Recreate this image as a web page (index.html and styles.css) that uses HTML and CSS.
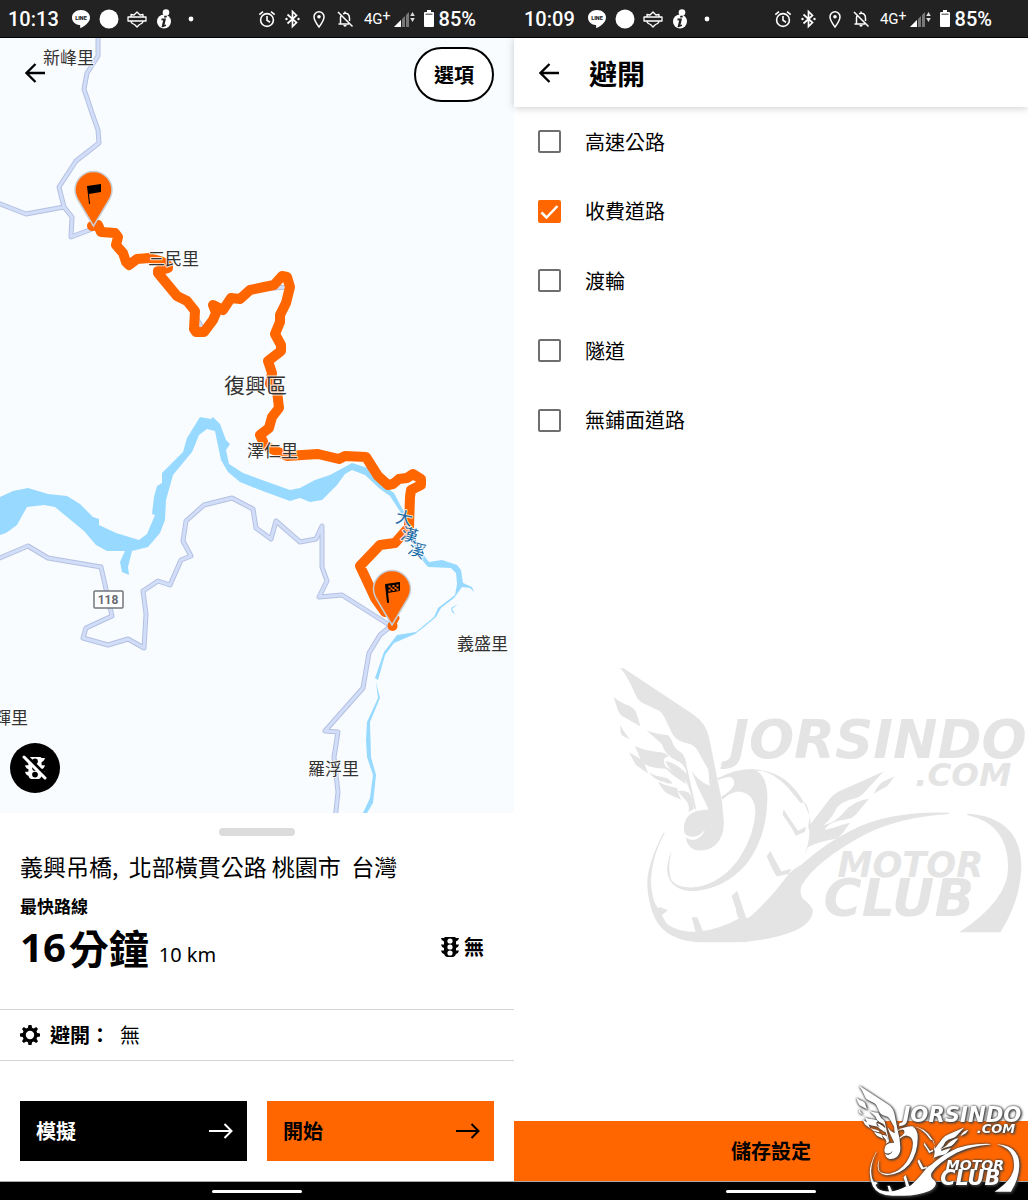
FILE: index.html
```html
<!DOCTYPE html>
<html lang="zh-Hant">
<head>
<meta charset="utf-8">
<meta name="viewport" content="width=device-width, initial-scale=1">
<title>路線規劃</title>
<link rel="stylesheet" href="styles.css">
</head>
<body>
<svg class="defs" width="0" height="0" aria-hidden="true">
  <defs>
    <symbol id="i-line" viewBox="0 0 20 20">
      <path fill="#fff" d="M10 1C5 1 1 4.200 1 8.500c0 4 3 7 7.500 7.600.9.200.8.700.6 2.200-.1.700.4.900 1 .5C12.500 17.500 19 14 19 8.500 19 4.200 15 1 10 1z"/>
      <text x="10" y="10.500" text-anchor="middle" font-family="Roboto, sans-serif" font-size="5.500" font-weight="900" fill="#222">LINE</text>
    </symbol>
    <symbol id="i-disc" viewBox="0 0 20 20"><circle cx="10" cy="10" r="9.500" fill="#fff"/></symbol>
    <symbol id="i-shield" viewBox="0 0 20 20">
      <g fill="none" stroke="#fff" stroke-width="1.300" stroke-linejoin="round">
        <path d="M1 8h18v4H1z"/>
        <path d="M4 8V5.500L7 6l3-3 3 3 3-.5V8M4 12c0 2 2 3 3.500 3.500L10 18l2.500-2.500C14 15 16 14 16 12"/>
      </g>
    </symbol>
    <symbol id="i-info" viewBox="0 0 20 20">
      <circle cx="9" cy="12.500" r="7" fill="#fff"/><circle cx="11" cy="3.500" r="3.300" fill="#fff"/>
      <path fill="#222" d="M6.500 9.500H11l-1.500 6.500 1.500-.5v1.500l-3.500 1.200H6.500l1.700-7-1.700.3zM9.300 6.800h2.600l-.3 1.600H9z"/>
    </symbol>
    <symbol id="i-dot" viewBox="0 0 20 20"><circle cx="8" cy="10" r="2.400" fill="#fff"/></symbol>
    <symbol id="i-alarm" viewBox="0 0 20 20">
      <g fill="none" stroke="#fff" stroke-width="1.600">
        <circle cx="10" cy="11" r="6.400"/><path d="M10 7v4.300l3 1.900M2.300 5.700 6 2.600M17.700 5.700 14 2.600"/>
      </g>
    </symbol>
    <symbol id="i-bt" viewBox="0 0 20 20">
      <path fill="none" stroke="#fff" stroke-width="1.700" d="M4.500 5.500l9 8L9.500 17.500v-15l4 4-9 8"/>
      <circle cx="3.500" cy="10" r="1.200" fill="#fff"/><circle cx="15.500" cy="10" r="1.200" fill="#fff"/>
    </symbol>
    <symbol id="i-place" viewBox="0 0 20 20">
      <path fill="none" stroke="#fff" stroke-width="1.500" d="M10 18C7 14 5 11 5 7.700a5 5 0 0 1 10 0C15 11 13 14 10 18z"/>
      <circle cx="10" cy="7.700" r="1.800" fill="#fff"/>
    </symbol>
    <symbol id="i-bell" viewBox="0 0 20 20">
      <path fill="none" stroke="#fff" stroke-width="1.500" d="M3 3l14.500 14.500M3.500 15H14M5.500 15V9c0-1 .3-2 .8-2.700M8 4.700C12 3 14.500 5.500 14.500 9v3M10 4V2.500"/>
      <path fill="#fff" d="M8.300 16h3.400a1.700 1.700 0 0 1-3.400 0z"/>
    </symbol>
    <symbol id="i-signal" viewBox="0 0 22 20">
      <path fill="#777" d="M0 18 15 3v15z"/><path fill="#fff" d="M0 18l7-7v7z"/>
      <path stroke="#222" d="M7.500 5v13M11.500 5v13"/>
      <path fill="#ddd" d="M18.500 3l2.300 4h-4.600zM18.500 13l2.300-4h-4.600z"/>
    </symbol>
    <symbol id="i-battery" viewBox="0 0 10 17"><path fill="#fff" d="M3 0h4v2h2q1 0 1 1v13q0 1-1 1H1q-1 0-1-1V3q0-1 1-1h2z"/><path fill="#777" d="M1.500 3.500h7V5h-7z"/></symbol>
    <symbol id="i-back" viewBox="0 0 20 20"><path fill="none" stroke="currentColor" stroke-width="2.300" d="M20 10H2M10.500 1 1.500 10l9 9"/></symbol>
    <symbol id="i-next" viewBox="0 0 24 16"><path fill="none" stroke="currentColor" stroke-width="2" d="M0 8h22M15.500 1l7 7-7 7"/></symbol>
    <symbol id="i-light" viewBox="0 0 20 20">
      <path fill="currentColor" d="M5 0h10l1 1h3q-.5 3-3 3.500V7.500h3q-.5 3-3 3.500V13.500h3q-.5 3-3 3.500-1 3-3 3H7q-2 0-3-3-2.500-.5-3-3.500h3V11q-2.500-.5-3-3.500h3V4.500Q1.500 4 1 1h3z"/>
      <g class="lamp"><circle cx="10" cy="4" r="2.600"/><circle cx="10" cy="10" r="2.600"/><circle cx="10" cy="16" r="2.600"/></g>
    </symbol>
    <symbol id="i-gear" viewBox="0 0 20 20">
      <path fill="currentColor" fill-rule="evenodd" d="M8.500 0h3l.6 2.800 1.700.7L16.200 2 18 4l-1.500 2.200.7 1.700 2.800.6v3l-2.800.6-.7 1.700L18 16.200 16.200 18l-2.400-1.500-1.700.7-.6 2.800h-3l-.6-2.800-1.700-.7L3.800 18 2 16.200l1.500-2.400-.7-1.700L0 11.500v-3l2.800-.6.7-1.700L2 4l1.800-2 2.400 1.500 1.700-.7zM10 5.800a4.200 4.200 0 1 0 0 8.400 4.200 4.200 0 0 0 0-8.400z"/>
    </symbol>
    <symbol id="pin" viewBox="-20 -20 40 60">
      <path fill="#f60" stroke="#c8cdd3" stroke-width="1.500" d="M0 36-14 12.500C-17 8-18.500 4.500-18.500 0a18.500 18.500 0 0 1 37 0c0 4.500-1.500 8-4.500 12.500z"/>
    </symbol>
    <symbol id="club" viewBox="38 50 1250 828">
      <path d="M55 51h15L280 190q38 25 48 72l24 121 14 67 6 65q0 45-27 70-27 20-60 13-23-8-28-38 11 10 28 7 23-9 30-30-15 19-33 21-20 2-28-10-8-28 11-53 20-20 60-18l-1-6-31-63-18-48q20 30 54 45l-4-49-33-58q-8-15-25-20l-20-5q-23-7-33-30l-21-45q-5-12-16-19l-45-21q-18-8-25-25-30-70-50-84z"/>
      <path d="M138 237q22 11 62 15 10 3 16 20 9 23 24 30 15 8 20 43l29 131-7-2q-7-44-20-74-4-15-24-25-30-15-42-44 10 0 20 5 20 8 44 33-4-30-30-40-35-15-45-50z"/>
      <path d="M40 137q20 18 50 28 15 10 18 20l13 41-46-26q-15-5-23-25zM59 221l11 19 18 24q-26-9-27-19zM104 285q26 13 71 18 25 2 30 15-20-3-10 27 20 15 35 20 25 15 28 35l-43-30q-15-20-30-17-35-3-50-13-15-10-20-30zM86 304l29 16q20 15 22 30l7 18-37-26zM145 364q20 12 45 15 20 3 27 20-20 0-25-6-25-2-47-29zM173 392q20 12 48 17 15 3 12 15l10 23-40-18q-12-5-30-37zM233 421q18-4 32 4 12 10 16 45l-2 6-14 8q5-20-5-33-12-12-27-30z"/>
      <path d="M352 383q48-28 108-28 43 15 43 85-1 120-63 200-70 80-170 82-70-7-69-72 4-30 14-52-15 62 0 92 20 25 75 20 80-15 130-90 45-70 47-140-4-55-52-58-25 3-48 25l-2-10q30-17 38-37 0-20-13-22-15 0-35 9z"/>
      <path d="M400 362q30-7 60-7 100 5 150 95 25 50 23 70l57-75q15-20 50-33l113-50-63 68q-10 10-25 13-35 7-53 27-12 30-40 54 38-9 63-42 30-32 74-38l-34 41q-15 20-40 22-35 5-50 18-20 20 10 8 40-13 57-17l-17 24q-13 20-30 25-45 7-80 25l-20 53q25-65 25-100l-4-15 4-28q-3-35-15-45l-13 1-37-46q-40-42-77-50-25-2-88 2zM677 549q15-20 35-19-5 15-35 19z"/>
      <path d="M824 429q11-29 31-39l31-13-21 28zM190 546q-49 94-49 154 2 60 24 105 35 70 145 71h90q100 0 190-36 50-25 50-60-4-15-30-35-12-17-4-40 44-75 194-155 100-50 250-60v-4q-180-5-290 51-80 38-155 106-20 10-37 27-60 80-118 130-13 6-30 3-60 35-130 42-60 0-90-25l-15-25 18-15-24-10-4 4q-20-20-23-84 3-74 42-144z"/>
      <path d="M275 801h17l18 44-22 4zM395 737l17-16 28 85-22-2q-8-5-10-30zM501 617l11-16 33 62 30-8-7 15-36 8q-10-10-31-61zM549 493l3-17 43 64 25-12-4 15-28 12q-8-20-39-62zM1105 488q163 12 163 162-3 100-63 196h-124q147-96 147-196 0-130-123-157z"/>
      <g class="club-text">
        <text x="388" y="320" font-size="160">JORSINDO</text>
        <text x="948" y="404" font-size="98">.COM</text>
        <text x="714" y="679" font-size="106">MOTOR</text>
        <text x="672" y="797" font-size="157">CLUB</text>
      </g>
    </symbol>
  </defs>
</svg>

<main class="screens">
  <section class="phone" aria-label="路線">
    <header class="status">
      <time>10:13</time>
      <div class="status-icons notes">
        <svg><use href="#i-line"/></svg><svg><use href="#i-disc"/></svg><svg><use href="#i-shield"/></svg><svg><use href="#i-info"/></svg><svg><use href="#i-dot"/></svg>
      </div>
      <div class="status-icons system">
        <svg><use href="#i-alarm"/></svg><svg><use href="#i-bt"/></svg><svg><use href="#i-place"/></svg><svg><use href="#i-bell"/></svg>
      </div>
      <span class="net">4G<sup>+</sup></span>
      <svg class="signal"><use href="#i-signal"/></svg>
      <svg class="battery"><use href="#i-battery"/></svg>
      <span>85%</span>
    </header>

    <div class="map">
      <svg class="map-canvas" viewBox="0 38 514 775" role="img" aria-label="路線地圖">
        <g fill="#97d9ff">
          <path d="M0 497 13 491 28 488 48 494 67 496 80 504 93 517 99 519V525L116 533 139 540 147 534 155 515 152 514 154 497 157 486 162 483V473L183 452 187 438 200 417 211 419 213 417 220 424 226 440 230 444 226 450 229 464 243 473 262 480 290 490 300 488 315 480 330 475 352 463 368 468 383 485 394 493 404 512 401 513 390 496 380 489 365 475 352 470 345 474 337 485 322 500 310 502 300 498 290 501 260 490 240 482 228 472 221 460 215 431 207 429 199 435 192 452 173 475 166 500 165 520 160 533 148 547 132 551 128 567 129 575 122 572 120 562 125 551H107L96 545 84 531 55 507 44 505 27 507 17 525 6 533 0 535z"/>
          <path d="M403 511 422 553 429 562 442 560 457 565 461 570 463 583 472 587 474 592 470 588 462 587 454 598 441 608 436 617 424 627 415 634 394 643 385 655 378 680 375 678 384 652 397 635 416 632 434 617 438 608 455 595 457 584 456 573 451 568 428 567 418 555 400 513z"/>
          <path d="M376 682 380 698 370 722 371 757 376 775 373 803 367 813H363L370 798 373 775 367 757 366 740 367 722 378 698zM458 604 452 609 455 614 459 617 452 612 451 608z"/>
        </g>
        <g class="roads">
          <path id="roads" d="M98 30V56L87 73 84 89 92 113 98 130 99 143 76 161 59 187 64 207 72 217 71 237 92 229M-5 202 26 214 64 207M-5 560 28 546 48 558 101 567 112 616 86 628 83 638 108 645 128 639 144 648 146 614 143 591 158 581 170 585 181 560 191 556 183 541 186 521 204 505 232 498 253 509 256 528 271 539 276 521 300 542 316 539 322 526V567L327 581 319 597 342 595 391 626 380 635 369 653 363 688 325 731 338 732 334 757 338 792 335 820M273 288 289 287M197 319 203 330"/>
          <use href="#roads"/>
        </g>
        <path class="route" d="M92 226 98 225 101 232 115 233 118 237 116 245 123 253 126 262 129 265 137 259 149 258 160 261 168 265 168 268 158 271V273L177 296 187 301 195 311 194 329 196 332H204L213 320 216 313 213 305 223 310 231 298 240 299 250 290 274 285 282 276 287 277 290 287 286 303 280 315V322L275 334 281 345V351L268 361 272 373 270 384 277 391 279 408 272 417 269 428 260 435 265 446 287 456 318 454 339 459 345 456 366 457 371 465 378 476 388 485 393 484 399 479 407 478 413 474 421 479V485L411 490 410 497 409 527 395 543 380 545 360 566 375 598 385 612"/>
        <circle cx="392.500" cy="626" r="5" fill="#f60"/>
        <path d="M392 627 397 618" stroke="#f60" stroke-width="5" stroke-linecap="round"/>
        <use href="#pin" x="73.500" y="170" width="40" height="60"/>
        <use href="#pin" x="372" y="569" width="40" height="60"/>
        <path d="M87 186 101 184V192L89 194 90 204H89z"/>
        <g transform="translate(298.500 398.500)">
          <path d="M87 186 101 184V192L89 194 90 204H89z" stroke="#000"/>
          <path fill="#f60" d="M90 187h2v2h-2zM94 186.500h2v2h-2zM98 186h2v2h-2zM92 189h2v2h-2zM96 188.500h2v2h-2zM90 191h2v2h-2zM94 190.500h2v2h-2zM98 190h2v2h-2z"/>
        </g>
        <rect x="94" y="591" width="29" height="17" rx="1" fill="#fff" stroke="#72767b" stroke-width="1.500"/>
        <text class="shield" x="108" y="604">118</text>
        <g class="places">
          <text x="43" y="64">新峰里</text>
          <text x="148" y="265">三民里</text>
          <text class="district" x="224" y="393">復興區</text>
          <text x="247" y="457">澤仁里</text>
          <text x="457" y="650">義盛里</text>
          <text x="308" y="775">羅浮里</text>
          <text x="-6" y="724">輝里</text>
        </g>
        <g class="water">
          <text transform="translate(403 524) rotate(12)">大</text>
          <text transform="translate(408 541) rotate(16)">漢</text>
          <text transform="translate(415 556) rotate(20)">溪</text>
        </g>
      </svg>
      <button class="icon-btn map-back" aria-label="返回"><svg><use href="#i-back"/></svg></button>
      <button class="options">選項</button>
      <button class="traffic" aria-label="關閉路況">
        <svg viewBox="0 0 26 26"><use href="#i-light" x="2" y="2" width="22" height="22"/><path d="M4 1 25 22" stroke="#000" stroke-width="4"/><path d="M2 2 23 23" stroke="#fff" stroke-width="3" stroke-linecap="round"/></svg>
      </button>
    </div>

    <section class="sheet">
      <div class="handle"></div>
      <div class="summary">
        <h1>義興吊橋,  北部橫貫公路 桃園市  台灣</h1>
        <p class="kind">最快路線</p>
        <div class="figures">
          <strong class="duration"><span class="num">16</span><span>分鐘</span></strong>
          <span class="distance">10 km</span>
          <span class="jam"><svg><use href="#i-light"/></svg>無</span>
        </div>
      </div>
      <div class="avoid"><svg><use href="#i-gear"/></svg><b>避開：</b><span>無</span></div>
      <div class="actions">
        <button class="action dark">模擬<svg><use href="#i-next"/></svg></button>
        <button class="action">開始<svg><use href="#i-next"/></svg></button>
      </div>
    </section>
    <footer class="navbar"></footer>
  </section>

  <section class="phone settings" aria-label="避開">
    <header class="status">
      <time>10:09</time>
      <div class="status-icons notes">
        <svg><use href="#i-line"/></svg><svg><use href="#i-disc"/></svg><svg><use href="#i-shield"/></svg><svg><use href="#i-info"/></svg><svg><use href="#i-dot"/></svg>
      </div>
      <div class="status-icons system">
        <svg><use href="#i-alarm"/></svg><svg><use href="#i-bt"/></svg><svg><use href="#i-place"/></svg><svg><use href="#i-bell"/></svg>
      </div>
      <span class="net">4G<sup>+</sup></span>
      <svg class="signal"><use href="#i-signal"/></svg>
      <svg class="battery"><use href="#i-battery"/></svg>
      <span>85%</span>
    </header>
    <div class="titlebar">
      <button class="icon-btn" aria-label="返回"><svg><use href="#i-back"/></svg></button>
      <h2>避開</h2>
    </div>
    <form class="choices">
      <label><input type="checkbox">高速公路</label>
      <label><input type="checkbox" checked>收費道路</label>
      <label><input type="checkbox">渡輪</label>
      <label><input type="checkbox">隧道</label>
      <label><input type="checkbox">無鋪面道路</label>
    </form>
    <button class="save">儲存設定</button>
    <footer class="navbar"></footer>
    <svg class="mark mark-large" viewBox="0 0 1250 828"><use href="#club" width="1250" height="828"/></svg>
    <svg class="mark mark-small" viewBox="0 0 1250 828"><use href="#club" width="1250" height="828"/></svg>
  </section>
</main>
</body>
</html>
```
FILE: styles.css
```css
* { box-sizing: border-box; }

body {
  margin: 0;
  background: #fff;
  color: #000;
  font-family: "Noto Sans CJK TC", "Noto Sans", sans-serif;
  font-size: 20px;
  line-height: 30px;
}

h1, h2, p { margin: 0; }

button {
  padding: 0;
  border: 0;
  background: none;
  color: inherit;
  font: inherit;
  font-weight: 700;
  cursor: pointer;
}

svg { flex: none; }
.defs { position: absolute; }

.screens {
  display: grid;
  grid-template-columns: 1fr 1fr;
  min-height: 100vh;
}

.phone {
  position: relative;
  display: flex;
  flex-direction: column;
  min-width: 0;
}

/* status bar */
.status {
  display: flex;
  align-items: center;
  height: 38px;
  padding: 0 38px 0 8px;
  border-bottom: 1px solid #000;
  background: #222;
  color: #fff;
  font-family: Roboto, sans-serif;
  font-weight: 500;
}
.settings .status { padding: 0 36px 0 10px; }
.status-icons { display: flex; }
.status-icons svg { width: 20px; height: 20px; }
.notes { gap: 8px; margin-left: 12px; }
.system { gap: 6px; margin-left: auto; }
.net {
  margin-left: 9px;
  font-size: 15px;
  font-weight: 400;
}
.net sup { font-size: 14px; line-height: 0; vertical-align: 3px; }
.signal { width: 22px; height: 20px; margin-left: 3px; }
.battery { width: 10px; height: 17px; margin: 0 5px 0 8px; }

/* map */
.map {
  position: relative;
  flex: 1;
  overflow: hidden;
  background: #f8fcff;
}
.map-canvas { display: block; width: 100%; }

.roads {
  fill: none;
  stroke: #b4c0e2;
  stroke-width: 5;
  stroke-linejoin: round;
  stroke-linecap: round;
}
.roads use { stroke: #d2def8; stroke-width: 3; }

.route {
  fill: none;
  stroke: #f60;
  stroke-width: 10;
  stroke-linejoin: round;
  stroke-linecap: round;
}

.places text, .water text {
  paint-order: stroke;
  stroke: #fff;
  stroke-opacity: .8;
  stroke-width: 2;
  stroke-linejoin: round;
}
.places { fill: #333; font-size: 17px; }
.places .district { font-size: 21px; }
.water { fill: #1769a5; font-size: 17px; text-anchor: middle; }
.shield {
  fill: #666a70;
  font-family: Roboto, sans-serif;
  font-size: 12px;
  font-weight: 700;
  text-anchor: middle;
}

.icon-btn { display: flex; }
.icon-btn svg { width: 20px; height: 20px; }

.map-back { position: absolute; top: 25px; left: 25px; }

.options {
  position: absolute;
  top: 9px;
  right: 20px;
  width: 80px;
  height: 55px;
  border: 2px solid #000;
  border-radius: 28px;
  background: #fff;
}

.lamp { fill: var(--lamp, #fff); }
.traffic {
  --lamp: #000;
  position: absolute;
  bottom: 20px;
  left: 10px;
  display: grid;
  place-items: center;
  width: 50px;
  height: 50px;
  border-radius: 50%;
  background: #000;
  color: #fff;
}
.traffic svg { width: 26px; height: 26px; }

/* route sheet */
.handle {
  width: 76px;
  height: 8px;
  margin: 15px auto 0;
  border-radius: 4px;
  background: #dcdcdc;
}
.summary { padding: 15px 30px 30px 20px; }
.summary h1 {
  font-size: 23px;
  font-weight: 400;
  white-space: pre;
}
.kind {
  margin-top: 13px;
  font-size: 17px;
  font-weight: 700;
  line-height: 24px;
}
.figures {
  display: flex;
  align-items: baseline;
  margin-top: 5px;
  line-height: 48px;
}
.duration { display: flex; gap: 3px; font-size: 40px; }
.num { font-family: "Noto Sans", sans-serif; }
.distance { margin-left: 10px; font-family: "Noto Sans", sans-serif; }
.jam {
  display: flex;
  align-items: center;
  align-self: flex-start;
  gap: 4px;
  margin-left: auto;
  font-weight: 700;
}
.jam svg { width: 20px; height: 20px; }

.avoid {
  display: flex;
  align-items: center;
  gap: 10px;
  height: 52px;
  padding: 0 20px;
  border-top: 1px solid #d4d4d4;
  border-bottom: 1px solid #d4d4d4;
}
.avoid svg { width: 20px; height: 20px; }

.actions {
  display: grid;
  grid-template-columns: 1fr 1fr;
  gap: 20px;
  padding: 40px 20px 20px;
}
.action {
  display: flex;
  align-items: center;
  justify-content: space-between;
  height: 60px;
  padding: 0 14px 0 16px;
  background: #f60;
}
.action svg { width: 24px; height: 16px; }
.dark { background: #000; color: #fff; }

.navbar {
  display: grid;
  place-items: center;
  height: 20px;
  border-top: 1px solid #aaa;
  background: #000;
}
.navbar::before {
  content: "";
  width: 90px;
  height: 3px;
  border-radius: 2px;
  background: #fff;
}

/* avoid settings */
.titlebar {
  display: flex;
  align-items: center;
  gap: 30px;
  height: 69px;
  padding: 0 25px;
  box-shadow: 0 1px 8px rgba(0, 0, 0, .2);
}
.titlebar h2 { font-size: 28px; line-height: 40px; }

.choices {
  display: grid;
  grid-template-rows: repeat(5, 1fr);
  height: 348px;
}
.choices label {
  display: flex;
  align-items: center;
  gap: 24px;
  padding-left: 24px;
}
.choices input {
  appearance: none;
  width: 23px;
  height: 23px;
  margin: 0;
  border: 2px solid #6e6e6e;
  border-radius: 2px;
}
.choices input:checked {
  border-color: #f60;
  background: #f60 url("data:image/svg+xml,%3Csvg xmlns='http://www.w3.org/2000/svg' viewBox='0 0 19 19'%3E%3Cpath d='M1.500 10.500l5 5L17.500 4' fill='none' stroke='white' stroke-width='2.500'/%3E%3C/svg%3E");
}

.save {
  height: 60px;
  margin-top: auto;
  background: #f60;
}

/* club logo overlays */
.mark { position: absolute; pointer-events: none; }
.club-text {
  font-family: "DejaVu Sans", sans-serif;
  font-weight: 700;
  font-style: italic;
}
.mark-large {
  right: 0;
  bottom: 258px;
  width: 415px;
  fill: #e4e4e4;
}
.mark-small {
  right: 6px;
  bottom: 5px;
  width: 166px;
  fill: #fff;
  filter: drop-shadow(0 0 1px #333) drop-shadow(1px 1px 1px #444);
}
```
